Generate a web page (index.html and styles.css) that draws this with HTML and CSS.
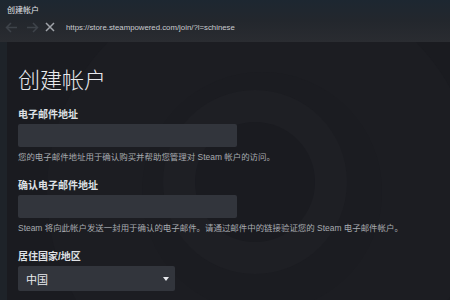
FILE: index.html
```html
<!DOCTYPE html>
<html lang="zh-CN">
<head>
    <meta charset="UTF-8" />
    <meta name="viewport" content="width=device-width, initial-scale=1.0" />
    <title>创建帐户</title>
    <link rel="stylesheet" href="styles.css">
</head>
<body>
    <div class="titlebar">
        <div class="title">创建帐户</div>
        <div class="nav">
            <svg class="nav-icon dim back" width="12" height="11" viewBox="0 0 12 11">
                <path d="M12 5.5H1.5M6 1L1.5 5.5 6 10" fill="none" stroke="currentColor" stroke-width="1.5"/>
            </svg>
            <svg class="nav-icon dim fwd" width="12" height="11" viewBox="0 0 12 11">
                <path d="M0 5.5h10.5M6 1l4.5 4.5L6 10" fill="none" stroke="currentColor" stroke-width="1.5"/>
            </svg>
            <svg class="nav-icon close" width="10" height="10" viewBox="0 0 10 10">
                <path d="M1 1l8 8M9 1l-8 8" fill="none" stroke="currentColor" stroke-width="1.5"/>
            </svg>
            <span class="url">https://store.steampowered.com/join/?l=schinese</span>
        </div>
    </div>

    <div class="page">
        <div class="side"></div>
        <div class="main">
            <svg class="watermark" width="450" height="260" viewBox="0 0 450 260">
                <circle cx="262" cy="150" r="215" fill="#1c1d22"/>
                <circle cx="262" cy="150" r="120" fill="#1b1c21"/>
                <circle cx="255" cy="140" r="92" fill="#1e1f24"/>
                <circle cx="255" cy="140" r="60" fill="#1a1b20"/>
            </svg>

            <h1>创建帐户</h1>

            <div class="field">
                <label>电子邮件地址</label>
                <div class="input"></div>
                <p class="hint">您的电子邮件地址用于确认购买并帮助您管理对 Steam 帐户的访问。</p>
            </div>

            <div class="field">
                <label>确认电子邮件地址</label>
                <div class="input"></div>
                <p class="hint">Steam 将向此帐户发送一封用于确认的电子邮件。请通过邮件中的链接验证您的 Steam 电子邮件帐户。</p>
            </div>

            <div class="field">
                <label>居住国家/地区</label>
                <div class="select">
                    <span>中国</span>
                    <span class="arrow"></span>
                </div>
            </div>
        </div>
    </div>
</body>
</html>
```

FILE: styles.css
```css
body {
    margin: 0;
    width: 450px;
    height: 300px;
    overflow: hidden;
    background-color: #1a1b20;
    font-family: "Liberation Sans", "Noto Sans CJK SC", sans-serif;
    color: #c6c8cc;
}
.titlebar {
    height: 42px;
    box-sizing: border-box;
    padding: 6px 0 0 5px;
    background: linear-gradient(to bottom, #1d2731 0%, #23272d 50%, #2a2c31 100%);
}
.title {
    margin-left: 2px;
    font-size: 8px;
    line-height: 10px;
    color: #e4e6ea;
}
.nav {
    display: flex;
    align-items: center;
    margin-top: 4px;
    height: 14px;
}
.nav-icon {
    color: #a0a4aa;
}
.nav-icon.dim {
    color: #3e434a;
}
.back {
    margin-right: 10px;
}
.fwd {
    margin-right: 6px;
}
.close {
    margin-right: 11px;
}
.url {
    font-size: 7.8px;
    color: #c9cbcf;
}
.page {
    display: flex;
    height: 258px;
}
.side {
    width: 7px;
    background-color: #1e2329;
}
.main {
    position: relative;
    flex: 1;
    padding: 26px 0 0 11px;
    overflow: hidden;
}
.watermark {
    position: absolute;
    left: -7px;
    top: 0;
    z-index: 0;
}
h1, .field {
    position: relative;
    z-index: 1;
}
h1 {
    margin: 0 0 15px;
    font-size: 22px;
    line-height: 26px;
    font-weight: 300;
    color: #e8eaee;
}
.field {
    margin-bottom: 17px;
}
label {
    display: block;
    font-size: 10px;
    line-height: 12px;
    font-weight: bold;
    color: #dfe1e5;
    margin-bottom: 3px;
}
.input {
    width: 219px;
    height: 23px;
    background-color: #32353c;
    border-radius: 2px;
}
.hint {
    margin: 4px 0 0;
    font-size: 8.45px;
    line-height: 12px;
    color: #a8abb0;
    white-space: nowrap;
}
.select {
    display: flex;
    align-items: center;
    justify-content: space-between;
    width: 157px;
    height: 25px;
    box-sizing: border-box;
    padding: 0 6px 0 8px;
    background-color: #32353c;
    border-radius: 2px;
    font-size: 11px;
    color: #e8eaee;
}
.arrow {
    width: 0;
    height: 0;
    border-left: 3px solid transparent;
    border-right: 3px solid transparent;
    border-top: 4px solid #e8eaee;
}
```
